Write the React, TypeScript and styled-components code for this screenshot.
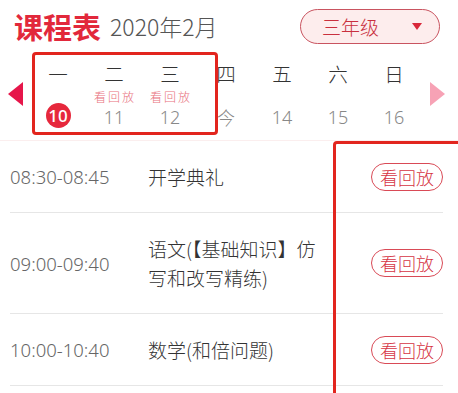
import React from "react";
import styled, { createGlobalStyle } from "styled-components";

const Global = createGlobalStyle`
  html, body { margin: 0; padding: 0; background: #fff; }
  body { font-family: "Noto Sans CJK SC", "Noto Sans", sans-serif; }
  * { box-sizing: border-box; }
`;

const Page = styled.div`
  position: relative;
  width: 458px;
  height: 393px;
  overflow: hidden;
  background: #fff;
`;

const Header = styled.div`
  display: flex;
  align-items: center;
  padding: 8px 18px 0 14px;
  height: 44px;
`;

const Title = styled.div`
  font-size: 29px;
  font-weight: 700;
  color: #e2283b;
  line-height: 36px;
`;

const Month = styled.div`
  font-size: 23px;
  font-weight: 300;
  color: #555;
  margin-left: 9px;
  line-height: 36px;
`;

const Grade = styled.div`
  margin-left: auto;
  width: 140px;
  height: 35px;
  border: 1px solid #c95460;
  border-radius: 18px;
  background: #fdeded;
  display: flex;
  align-items: center;
  padding: 0 17px 0 21px;
  font-size: 19px;
  font-weight: 300;
  color: #c9303e;
`;

const Caret = styled.span`
  margin-left: auto;
  width: 0;
  height: 0;
  border-left: 5px solid transparent;
  border-right: 5px solid transparent;
  border-top: 7px solid #d9283a;
`;

const Week = styled.div`
  display: flex;
  align-items: flex-start;
  height: 97px;
  padding-top: 18px;
  border-bottom: 1px solid #fbeeee;
`;

const ArrowBox = styled.div`
  width: 30px;
  display: flex;
  justify-content: center;
  padding-top: 20px;
`;

const Arrow = styled.span<{ $dir: "left" | "right"; $color: string }>`
  width: 0;
  height: 0;
  border-top: 12px solid transparent;
  border-bottom: 12px solid transparent;
  ${(p) =>
    p.$dir === "left"
      ? `border-right: 15px solid ${p.$color};`
      : `border-left: 15px solid ${p.$color};`}
`;

const Days = styled.div`
  display: flex;
`;

const Day = styled.div`
  width: 56px;
  display: flex;
  flex-direction: column;
  align-items: center;
`;

const DayName = styled.div`
  font-size: 19.5px;
  font-weight: 300;
  line-height: 24px;
  height: 24px;
  color: #333;
`;

const Replay = styled.div`
  margin-top: 3.5px;
  font-size: 12px;
  font-weight: 300;
  line-height: 14px;
  height: 14px;
  color: #e8707c;
  letter-spacing: 2px;
  padding-left: 2px;
`;

const DateNum = styled.div<{ $active?: boolean }>`
  margin-top: 1px;
  height: 24px;
  display: flex;
  align-items: center;
  justify-content: center;
  font-family: "Noto Sans", "Noto Sans CJK SC", sans-serif;
  font-size: 18px;
  font-weight: 300;
  color: #888;
  ${(p) =>
    p.$active &&
    `
    width: 25px;
    height: 25px;
    margin-top: -1px;
    border-radius: 50%;
    background: #e6283c;
    color: #fff;
    font-weight: 500;
    font-size: 17px;
  `}
`;

const List = styled.div`
  padding: 0 15px 0 10px;
`;

const Row = styled.div`
  display: flex;
  align-items: center;
  min-height: 71px;
  border-bottom: 1px solid #e6e6e6;
`;

const Time = styled.div`
  width: 138px;
  flex: none;
  font-family: "Noto Sans", sans-serif;
  font-size: 18.5px;
  font-weight: 300;
  color: #666;
`;

const Course = styled.div`
  width: 184px;
  flex: none;
  padding: 21px 0;
  font-size: 19px;
  font-weight: 300;
  line-height: 29px;
  color: #333;
`;

const ReplayBtn = styled.div`
  margin-left: auto;
  flex: none;
  height: 28px;
  padding: 0 8px;
  border: 1px solid #d94a56;
  border-radius: 14px;
  font-size: 18px;
  font-weight: 300;
  line-height: 26px;
  color: #d63444;
`;

const Mark = styled.div<{ $l: number; $t: number; $w: number; $h: number }>`
  position: absolute;
  left: ${(p) => p.$l}px;
  top: ${(p) => p.$t}px;
  width: ${(p) => p.$w}px;
  height: ${(p) => p.$h}px;
  border: 3px solid #e2251e;
  border-radius: 4px;
  pointer-events: none;
`;

const days = [
  { n: "一", d: "10", active: true },
  { n: "二", d: "11", replay: true },
  { n: "三", d: "12", replay: true },
  { n: "四", d: "今" },
  { n: "五", d: "14" },
  { n: "六", d: "15" },
  { n: "日", d: "16" },
];

const courses = [
  { t: "08:30-08:45", c: "开学典礼" },
  { t: "09:00-09:40", c: "语文(【基础知识】仿写和改写精练)" },
  { t: "10:00-10:40", c: "数学(和倍问题)" },
];

export default function App() {
  return (
    <Page>
      <Global />
      <Header>
        <Title>课程表</Title>
        <Month>2020年2月</Month>
        <Grade>
          三年级
          <Caret />
        </Grade>
      </Header>
      <Week>
        <ArrowBox>
          <Arrow $dir="left" $color="#e6164a" />
        </ArrowBox>
        <Days>
          {days.map((x) => (
            <Day key={x.n}>
              <DayName>{x.n}</DayName>
              <Replay>{x.replay ? "看回放" : ""}</Replay>
              <DateNum $active={x.active}>{x.d}</DateNum>
            </Day>
          ))}
        </Days>
        <ArrowBox>
          <Arrow $dir="right" $color="#f7a2b5" />
        </ArrowBox>
      </Week>
      <List>
        {courses.map((r) => (
          <Row key={r.t}>
            <Time>{r.t}</Time>
            <Course>{r.c}</Course>
            <ReplayBtn>看回放</ReplayBtn>
          </Row>
        ))}
      </List>
      <Mark $l={32} $t={52} $w={186} $h={83} />
      <Mark $l={333} $t={141} $w={150} $h={300} />
    </Page>
  );
}
